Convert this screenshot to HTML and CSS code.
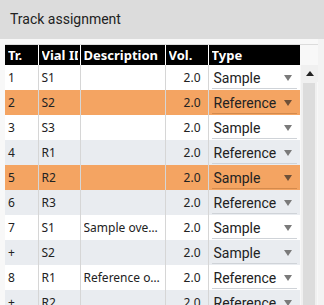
FILE: index.html
```html
<!DOCTYPE html>
<html>
<head>
<meta charset="utf-8">
<link rel="stylesheet" href="styles.css">
</head>
<body>
<div class="titlebar">Track assignment</div>
<div class="content">
  <div class="frame">
    <table class="grid">
      <colgroup>
        <col class="c-tr"><col class="c-vial"><col class="c-desc"><col class="c-vol"><col class="c-type">
      </colgroup>
      <thead>
        <tr><th><span class="hd">Tr.</span></th><th><span class="hd">Vial ID</span></th><th><span class="hd">Description</span></th><th><span class="hd">Vol.</span></th><th><span class="hd">Type</span></th></tr>
      </thead>
      <tbody>
        <tr class="odd"><td>1</td><td>S1</td><td></td><td class="num">2.0</td><td><div class="sel"><span>Sample</span><i class="tri"></i></div></td></tr>
        <tr class="active"><td>2</td><td>S2</td><td></td><td class="num">2.0</td><td><div class="sel"><span>Reference</span><i class="tri"></i></div></td></tr>
        <tr class="odd"><td>3</td><td>S3</td><td></td><td class="num">2.0</td><td><div class="sel"><span>Sample</span><i class="tri"></i></div></td></tr>
        <tr class="even"><td>4</td><td>R1</td><td></td><td class="num">2.0</td><td><div class="sel"><span>Reference</span><i class="tri"></i></div></td></tr>
        <tr class="active"><td>5</td><td>R2</td><td></td><td class="num">2.0</td><td><div class="sel"><span>Sample</span><i class="tri"></i></div></td></tr>
        <tr class="even"><td>6</td><td>R3</td><td></td><td class="num">2.0</td><td><div class="sel"><span>Reference</span><i class="tri"></i></div></td></tr>
        <tr class="odd"><td>7</td><td>S1</td><td class="desc"><span class="clip">Sample overview</span></td><td class="num">2.0</td><td><div class="sel"><span>Sample</span><i class="tri"></i></div></td></tr>
        <tr class="even"><td>+</td><td>S2</td><td></td><td class="num">2.0</td><td><div class="sel"><span>Sample</span><i class="tri"></i></div></td></tr>
        <tr class="odd"><td>8</td><td>R1</td><td class="desc"><span class="clip">Reference overview</span></td><td class="num">2.0</td><td><div class="sel"><span>Reference</span><i class="tri"></i></div></td></tr>
        <tr class="even"><td>+</td><td>R2</td><td></td><td class="num">2.0</td><td><div class="sel"><span>Reference</span><i class="tri"></i></div></td></tr>
      </tbody>
    </table>
    <div class="scrollbar">
      <div class="sb-head"></div>
      <div class="sb-up"><i class="up"></i></div>
      <div class="sb-thumb"></div>
    </div>
  </div>
</div>
</body>
</html>
```
FILE: styles.css
```css
html, body {
  margin: 0;
  padding: 0;
  height: 305px;
  overflow: hidden;
  background: #f3f3f3;
}
.titlebar {
  height: 39px;
  box-sizing: border-box;
  background: #dcdcdc;
  font-family: Roboto, sans-serif;
  font-size: 14px;
  color: #222;
  padding: 11px 0 0 10px;
}
.content {
  background: #f8f8f8;
  padding: 5px 0 0 5px;
  width: 313px;
  height: 266px;
  overflow: hidden;
}
.frame {
  display: flex;
  align-items: flex-start;
  border-top: 1px solid #dcdcdc;
}
.grid {
  border-collapse: collapse;
  table-layout: fixed;
  width: 295px;
  font-family: "Noto Sans", "Open Sans", sans-serif;
  font-size: 12px;
  color: #222;
}
.c-tr { width: 33px; }
.c-vial { width: 42px; }
.c-desc { width: 85px; }
.c-vol { width: 43px; }
.c-type { width: 92px; }
.grid th {
  background: #000;
  color: #fff;
  font-weight: bold;
  font-size: 13px;
  text-align: left;
  height: 20px;
  padding: 0 2px 0 3px;
  border-left: 1px solid #fff;
  line-height: 20px;
}
.grid th:first-child { border-left: none; }
.hd {
  display: block;
  white-space: nowrap;
  overflow: hidden;
}
.grid td {
  height: 25px;
  padding: 0 3px;
  border-left: 1px solid #d6d6d6;
  white-space: nowrap;
  overflow: hidden;
  box-sizing: border-box;
}
.grid td:first-child { border-left: none; }
.grid td.num { text-align: right; padding-right: 7px; }
.grid td.desc { padding-left: 3px; padding-right: 2px; }
.clip {
  display: block;
  overflow: hidden;
  text-overflow: ellipsis;
  white-space: nowrap;
}
tr.odd td { background: #fff; }
tr.even td { background: #e9ecf0; }
tr.active td { background: #f4a462; }
.sel {
  display: flex;
  align-items: center;
  justify-content: space-between;
  height: 19px;
  margin-top: 2px;
  border-bottom: 1px solid #cfd3d8;
  font-family: Roboto, sans-serif;
  font-size: 14px;
  color: #222;
  padding: 0 5px 0 2px;
}
tr.active .sel { border-bottom-color: #d48a4c; }
.tri {
  width: 0;
  height: 0;
  border-left: 4px solid transparent;
  border-right: 4px solid transparent;
  border-top: 6px solid #7a7a7a;
}
tr.active .tri { border-top-color: #6e5038; }
.scrollbar {
  width: 17px;
  margin-left: 1px;
  display: flex;
  flex-direction: column;
  align-self: stretch;
}
.sb-head { height: 20px; background: #f8f8f8; }
.sb-up {
  height: 17px;
  background: #f0f0f0;
  display: flex;
  align-items: center;
  justify-content: center;
}
.up {
  width: 0;
  height: 0;
  border-left: 4px solid transparent;
  border-right: 4px solid transparent;
  border-bottom: 5px solid #222;
}
.sb-thumb {
  flex: 1;
  background: #dcdcdc;
  margin: 1px 3px 0 2px;
  box-shadow: 0 0 0 2px #f0f0f0;
}
```
